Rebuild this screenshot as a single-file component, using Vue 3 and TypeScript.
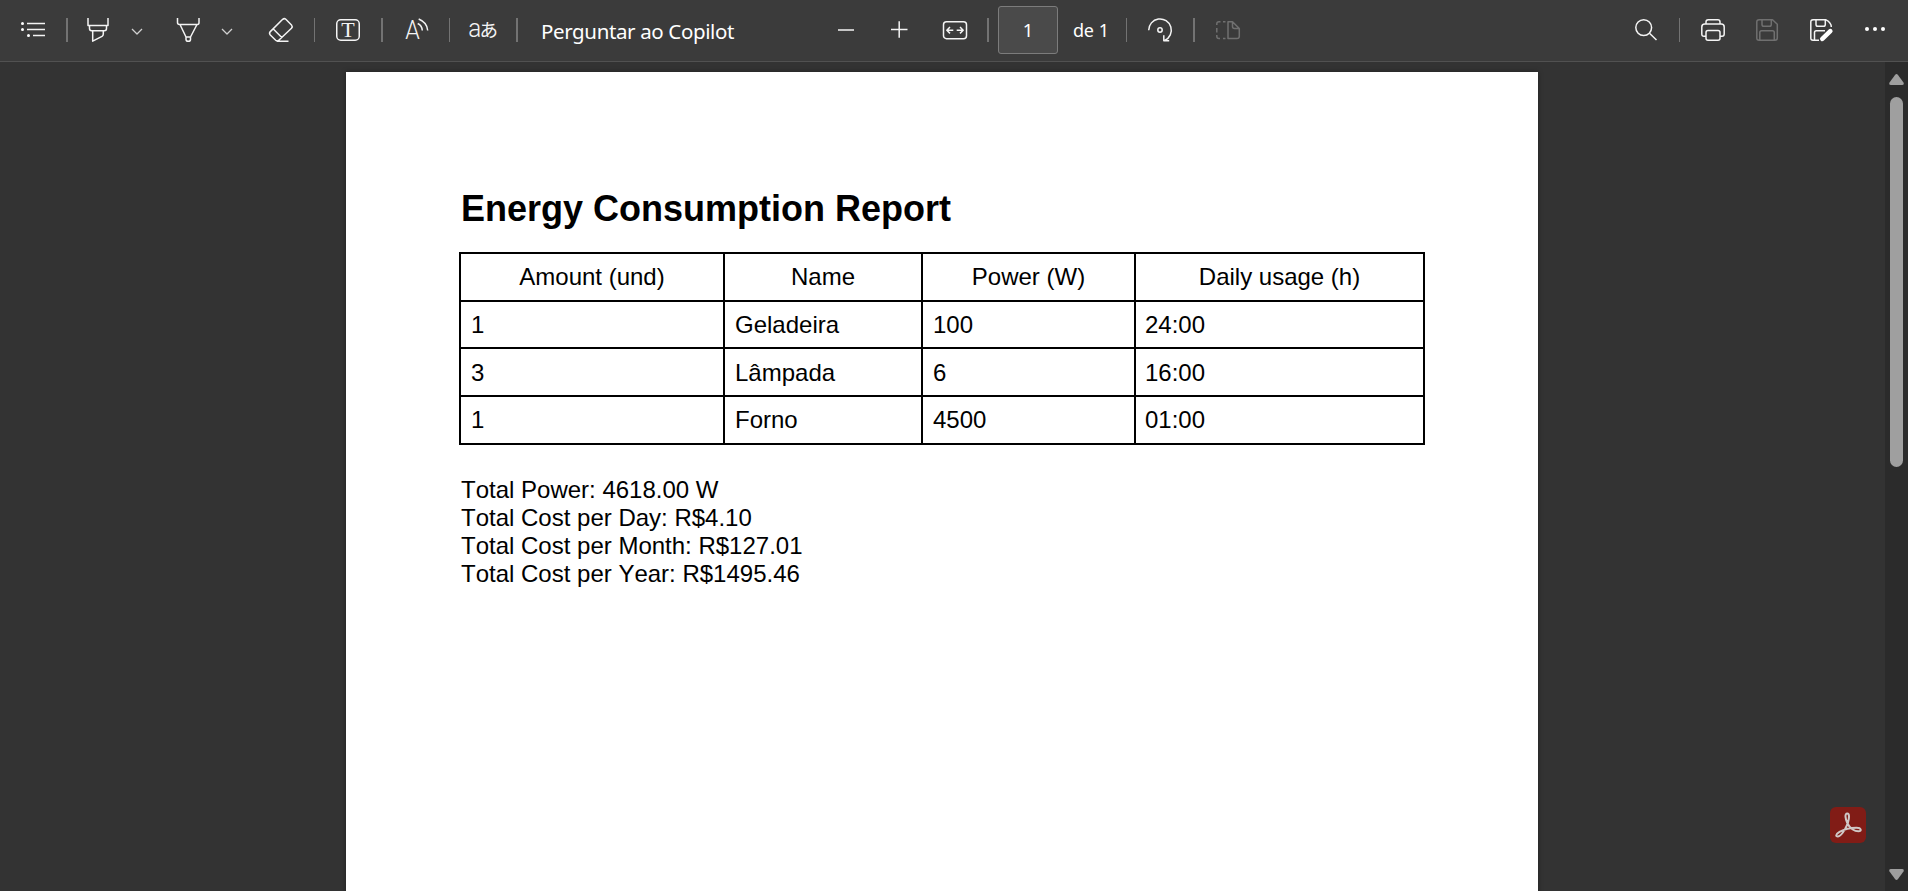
<script setup lang="ts">
interface Appliance {
  amount: number
  name: string
  power: number
  usage: string
}

const headers: string[] = ['Amount (und)', 'Name', 'Power (W)', 'Daily usage (h)']

const appliances: Appliance[] = [
  { amount: 1, name: 'Geladeira', power: 100, usage: '24:00' },
  { amount: 3, name: 'Lâmpada', power: 6, usage: '16:00' },
  { amount: 1, name: 'Forno', power: 4500, usage: '01:00' },
]

const totals: string[] = [
  'Total Power: 4618.00 W',
  'Total Cost per Day: R$4.10',
  'Total Cost per Month: R$127.01',
  'Total Cost per Year: R$1495.46',
]
</script>

<template>
  <div class="viewer">
    <header class="toolbar">
      <svg class="icon" viewBox="0 0 24 24">
        <path d="M6 1.5H24M6 7.5H24M12 13.5H24" transform="translate(0 4)" />
        <g class="solid">
          <circle cx="1.5" cy="5.5" r="1.5" /><circle cx="1.5" cy="11.5" r="1.5" /><circle cx="7.5" cy="17.5" r="1.5" />
        </g>
      </svg>
      <i class="sep wide g21"></i>
      <svg class="icon g18" viewBox="0 0 24 24">
        <path d="M2 0V7.5H22V0M3.5 7.5V10.5Q3.5 12.7 5.5 12.7H18.5Q20.5 12.7 20.5 10.5V7.5M6.7 12.7V23.2L16 18.3Q17.3 17.5 17.3 16V12.7" />
      </svg>
      <svg class="chevron g20" viewBox="0 0 14 24"><path d="M2 11L7 16L12 11" /></svg>
      <svg class="icon g32" viewBox="0 0 24 24">
        <path d="M1.5 0V4.5Q1.5 6.5 3.5 6.5H21.500Q23 6.500 23 4.500V0M4 6.500L10 19M21 6.500L14.500 19M10 19H14.500V21.500Q14.500 23.300 12.300 23.300Q10 23.300 10 21.500Z" />
      </svg>
      <svg class="chevron g20" viewBox="0 0 14 24"><path d="M2 11L7 16L12 11" /></svg>
      <svg class="icon g35" viewBox="0 0 24 24">
        <path d="M1.300 13.600L13.700 1.300Q15.300 0 16.800 1.300L22.500 7Q23.900 8.600 22.500 10.200L9.800 22.300Q8.300 23.700 6.700 22.300L1.300 17Q-.2 15.200 1.300 13.600ZM4.300 11L12.800 19.500M8 23.200H19.500" />
      </svg>
      <i class="sep g21"></i>
      <svg class="icon g21" viewBox="0 0 24 24">
        <rect x=".75" y="1.750" width="22.500" height="20.500" rx="4" />
        <text class="serif" x="12" y="19.200" text-anchor="middle">T</text>
      </svg>
      <i class="sep wide g21"></i>
      <svg class="icon g22" viewBox="0 0 24 24">
        <text class="light" x=".3" y="21" textLength="14.500" lengthAdjust="spacingAndGlyphs">A</text>
        <path d="M12.700 5.500Q17 7.500 17.300 12.500M13.700 1Q22.200 4.500 22.700 12.500" />
      </svg>
      <i class="sep g20"></i>
      <svg class="translate g18" viewBox="0 0 29 24">
        <text class="latin" x=".2" y="18.500" textLength="13" lengthAdjust="spacingAndGlyphs">a</text>
        <text class="kana" x="11.500" y="19">あ</text>
      </svg>
      <i class="sep wide g19"></i>
      <span class="copilot">Perguntar ao Copilot</span>

      <svg class="icon g92" viewBox="0 0 24 24"><path d="M4 12H20" /></svg>
      <svg class="icon g29" viewBox="0 0 24 24"><path d="M4 11.500H20.500M12.200 3.200V19.800" /></svg>
      <svg class="icon g32" viewBox="0 0 24 24">
        <rect x=".5" y="3.700" width="23" height="17" rx="3" />
        <path d="M10.300 12.200H4M7 9L3.800 12.200L7 15.400M13.700 12.200H20M17 9L20.200 12.200L17 15.400" />
      </svg>
      <i class="sep wide g20"></i>
      <div class="page-input">1</div>
      <span class="page-count">de 1</span>
      <i class="sep g19"></i>
      <svg class="icon g21" viewBox="0 0 24 24">
        <path d="M.7 12.300A11.300 11.300 0 1 1 16.700 22.500M15.800 17.300V22.800H21.200" />
        <circle cx="12" cy="12" r="2.200" />
      </svg>
      <i class="sep wide g21"></i>
      <svg class="icon dim g21" viewBox="0 0 24 24">
        <path d="M12 3.700V20.500H21Q23.300 20.500 23.300 18.200V10.500L16.500 3.700ZM16.500 3.700V8.500Q16.500 10.500 18.500 10.500H23.300M9.500 3.700H7M4.500 3.700H3Q.8 3.700 .8 6V7M.8 10V14.500M.8 17V18.200Q.8 20.500 3 20.500H4M7 20.500H9.500" />
      </svg>

      <div class="actions">
        <svg class="icon" viewBox="0 0 24 24">
          <circle cx="9.700" cy="9.600" r="7.900" /><path d="M15.500 15.300L22.500 22" />
        </svg>
        <i class="sep g21"></i>
        <svg class="icon g21" viewBox="0 0 24 24">
          <path d="M5 6V4Q5 1.800 7.200 1.800H16.800Q19 1.800 19 4V6M5 18.300H3Q.8 18.300 .8 16V9Q.8 6 3.800 6H20.200Q23.200 6 23.200 9V16Q23.200 18.300 21 18.300H19" />
          <rect x="5" y="12.500" width="14" height="9.700" rx="2" />
        </svg>
        <svg class="icon dim g30" viewBox="0 0 24 24">
          <path d="M4 1.800H17.500L22.300 6.300V20Q22.300 22.200 20 22.200H4Q1.800 22.200 1.800 20V4Q1.800 1.800 4 1.800ZM7 1.800V6.500Q7 8.300 8.800 8.300H14.500Q16.300 8.300 16.300 6.500V1.800M4.800 22V14.500Q4.800 12.700 6.600 12.700H17.500Q19.300 12.700 19.300 14.500V22" />
        </svg>
        <svg class="icon g30" viewBox="0 0 24 24">
          <path d="M10 22.200H4Q1.800 22.200 1.800 20V4Q1.800 1.800 4 1.800H17Q22.300 4.500 22.300 9M7 1.800V6.500Q7 8.300 8.800 8.300H14.500Q16.300 8.300 16.300 6.500V1.800M5.500 22V14.500Q5.500 12.700 7.300 12.700H16" />
          <path class="pen" d="M13.300 20.800L21.300 13.200" />
        </svg>
        <svg class="icon g30" viewBox="0 0 24 24">
          <g class="solid"><circle cx="4" cy="11" r="2" /><circle cx="12" cy="11" r="2" /><circle cx="20" cy="11" r="2" /></g>
        </svg>
      </div>
    </header>

    <div class="workspace">
      <main class="canvas">
        <article class="page">
          <h1>Energy Consumption Report</h1>
          <table>
            <colgroup><col class="c1" /><col class="c2" /><col class="c3" /><col class="c4" /></colgroup>
            <thead>
              <tr><th v-for="h in headers" :key="h">{{ h }}</th></tr>
            </thead>
            <tbody>
              <tr v-for="a in appliances" :key="a.name">
                <td>{{ a.amount }}</td>
                <td>{{ a.name }}</td>
                <td>{{ a.power }}</td>
                <td>{{ a.usage }}</td>
              </tr>
            </tbody>
          </table>
          <div class="totals">
            <p v-for="t in totals" :key="t">{{ t }}</p>
          </div>
        </article>
      </main>
      <aside class="scrollbar">
        <svg viewBox="0 0 15 11"><path d="M6 1Q7.500 -.8 9 1L14.500 8.500Q15.500 11 13 11H2Q-.5 11 .5 8.500Z" /></svg>
        <div class="thumb"></div>
        <svg class="down" viewBox="0 0 15 11"><path d="M6 10Q7.500 11.800 9 10L14.500 2.500Q15.500 0 13 0H2Q-.5 0 .5 2.500Z" /></svg>
      </aside>
    </div>

    <div class="acrobat">
      <svg viewBox="0 0 36 36">
        <path d="M17.300 6.500C14.500 6.500 15.200 11.500 17.500 16.500C19.800 21.300 24.500 24.300 28.500 24.300C32 24.300 31.500 20.700 26.500 20.700C21 20.700 14 22.300 9.500 24.800C5 27.500 5.800 29.700 8 29.500C12 29 19 17 19 9.500C19 7.500 18.500 6.500 17.300 6.500Z" />
      </svg>
    </div>
  </div>
</template>

<style>
body {
  margin: 0;
  overflow: hidden;
  background: #333;
}
</style>

<style scoped>
.viewer {
  position: relative;
  display: flex;
  flex-direction: column;
  height: 100vh;
  overflow: hidden;
  background: #333;
  font-family: "Liberation Sans", Arial, sans-serif;
}
.toolbar {
  display: flex;
  align-items: center;
  flex: none;
  box-sizing: border-box;
  height: 62px;
  padding: 0 21px 1px;
  background: #3b3b3b;
  border-bottom: 1px solid #515151;
  color: #fff;
  font-family: "Noto Sans", "Open Sans", sans-serif;
}
.toolbar svg {
  flex: none;
  height: 24px;
  fill: none;
  stroke: #f4f4f4;
  stroke-width: 1.5;
  stroke-linejoin: round;
  overflow: visible;
}
.toolbar .icon { width: 24px; }
.toolbar .chevron { width: 14px; stroke: #d0d0d0; stroke-width: 1.3; }
.toolbar .translate { width: 29px; }
.toolbar .dim { stroke: #707070; }
.toolbar .solid { fill: #fff; stroke: none; }
.toolbar .pen { stroke: #fff; stroke-width: 4.6; stroke-linecap: round; }
.toolbar text { fill: #f4f4f4; stroke: none; }
.serif { font: 22px "Liberation Serif", serif; }
.light { font: 300 25px Roboto, sans-serif; }
.latin { font: 300 26px Roboto, sans-serif; }
.kana { font: 400 18.5px "Noto Sans CJK JP", sans-serif; }
.sep { flex: none; width: 1px; height: 24px; background: #737373; }
.sep.wide { width: 2px; }
.g18 { margin-left: 18px; }
.g19 { margin-left: 19px; }
.g20 { margin-left: 20px; }
.g21 { margin-left: 21px; }
.g22 { margin-left: 22px; }
.g29 { margin-left: 29px; }
.g30 { margin-left: 30px; }
.g32 { margin-left: 32px; }
.g35 { margin-left: 35px; }
.g92 { margin-left: 92px; }
.copilot {
  width: 201px;
  margin-left: 23px;
  padding-top: 2px;
  font-size: 20.5px;
  letter-spacing: -0.37px;
  line-height: 28px;
  white-space: nowrap;
}
.page-input {
  box-sizing: border-box;
  width: 60px;
  height: 48px;
  margin-left: 9px;
  border: 1px solid #7c7c7c;
  border-radius: 3px;
  background: #4a4a4a;
  font-size: 18.5px;
  line-height: 46px;
  text-align: center;
}
.page-count {
  width: 34px;
  margin-left: 15px;
  font-size: 18px;
  letter-spacing: -0.4px;
  word-spacing: 1px;
  line-height: 26px;
  white-space: nowrap;
}
.actions { display: flex; align-items: center; margin-left: auto; }

.workspace { display: flex; flex: 1; min-height: 0; }
.canvas { flex: 1; padding: 10px 347px 0 346px; overflow: hidden; }
.page {
  box-sizing: border-box;
  height: 1686px;
  padding: 116px 113px 0 113px;
  background: #fff;
  box-shadow: 0 0 5px rgba(0, 0, 0, 0.4);
  color: #000;
  font-size: 24px;
  font-kerning: none;
}
h1 {
  margin: 0 0 22px;
  padding-left: 2px;
  font-size: 36px;
  font-weight: 700;
  line-height: 42px;
  white-space: nowrap;
}
table {
  width: 966px;
  border-collapse: collapse;
  table-layout: fixed;
}
.c1 { width: 264px; }
.c2 { width: 198px; }
.c3 { width: 213px; }
.c4 { width: 289px; }
th, td {
  height: 45.7px;
  padding: 0 9px;
  border: 2px solid #000;
  box-sizing: content-box;
  font-weight: 400;
  line-height: 28px;
  text-align: left;
}
th { text-align: center; }
td:not(:last-child) { padding-left: 10px; }
tbody tr:nth-child(n + 2) td { height: 44.7px; padding-top: 1px; }
.totals { padding: 31px 0 0 2px; }
.totals p { margin: 0; line-height: 28px; white-space: nowrap; }

.scrollbar {
  display: flex;
  flex: none;
  flex-direction: column;
  align-items: center;
  box-sizing: border-box;
  width: 23px;
  padding: 12px 0 11px;
  background: #2b2b2b;
}
.scrollbar svg { flex: none; width: 15px; height: 11px; fill: #9f9f9f; }
.thumb { width: 13px; height: 370px; margin-top: 12px; border-radius: 7px; background: #9f9f9f; }
.scrollbar .down { margin-top: auto; }

.acrobat {
  position: absolute;
  right: 42px;
  bottom: 48px;
  width: 36px;
  height: 36px;
  border-radius: 6px;
  background: #811c16;
}
.acrobat svg { display: block; fill: none; stroke: #d0c8c6; stroke-width: 2; }
</style>
